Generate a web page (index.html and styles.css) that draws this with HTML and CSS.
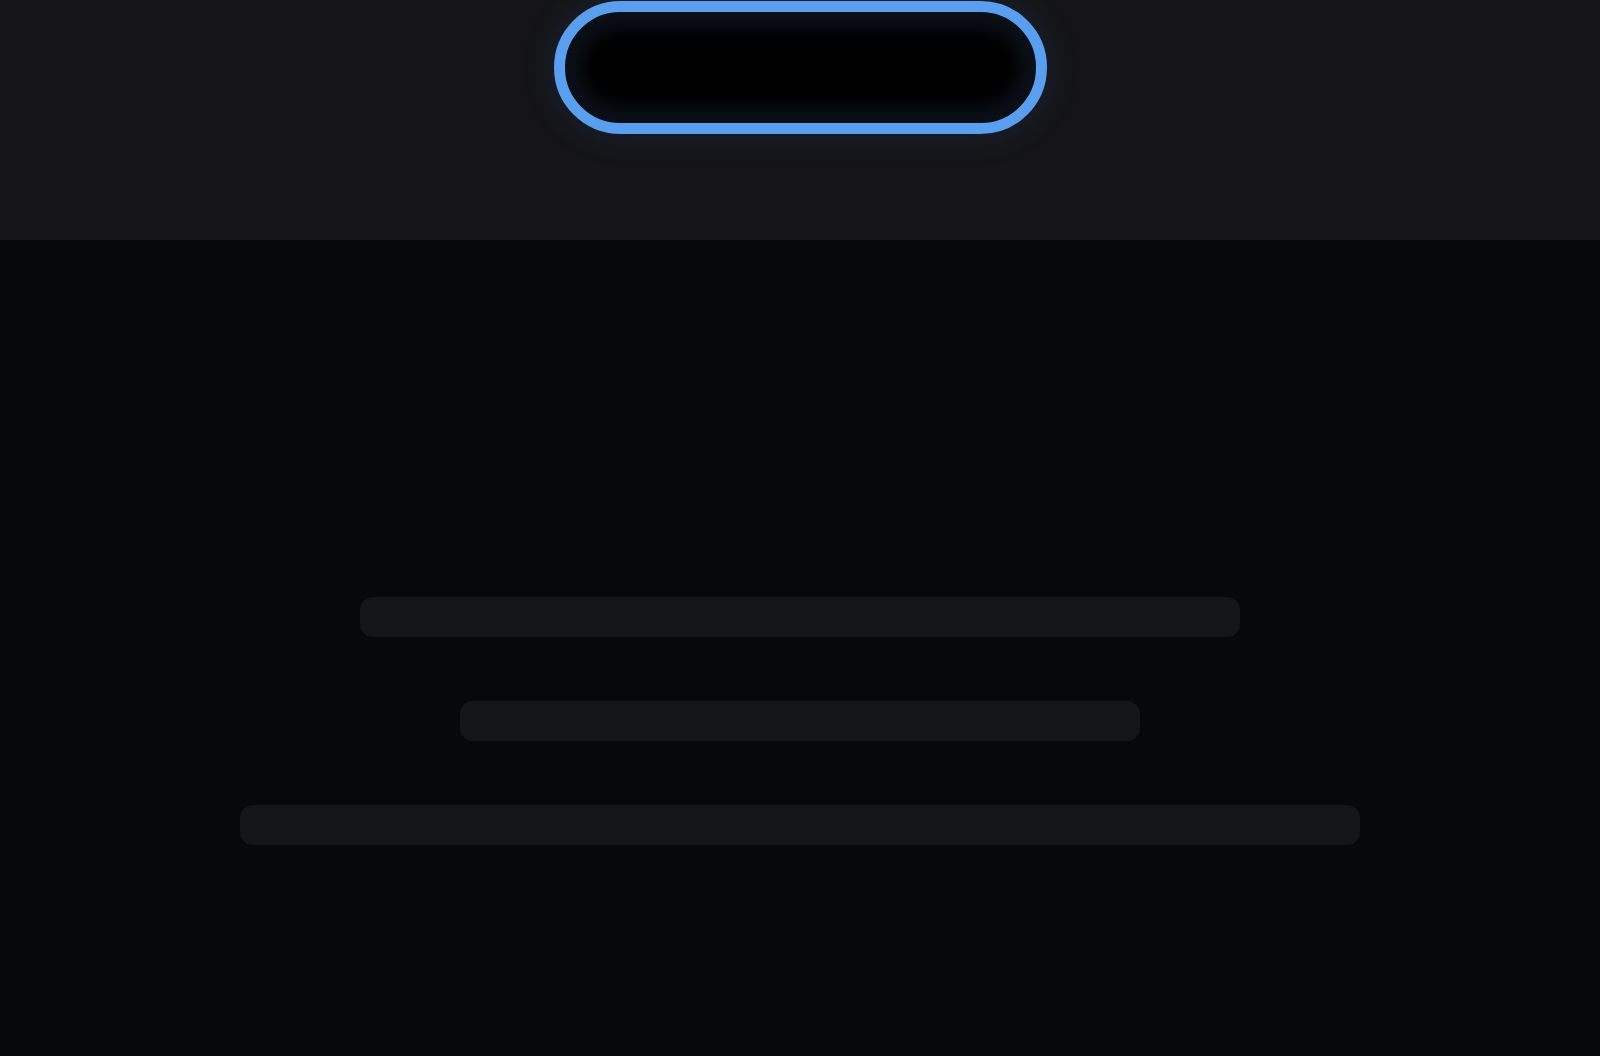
FILE: index.html
```html
<!DOCTYPE html>
<html lang="en">
<head>
<meta charset="utf-8">
<title>Loading</title>
<link rel="stylesheet" href="styles.css">
</head>
<body>
  <header class="topbar">
    <div class="search-pill" aria-label="Search"></div>
  </header>
  <main class="content">
    <div class="skeleton skeleton--md"></div>
    <div class="skeleton skeleton--sm"></div>
    <div class="skeleton skeleton--lg"></div>
  </main>
</body>
</html>
```
FILE: styles.css
```css
html, body {
  margin: 0;
  padding: 0;
  height: 100%;
  background: #07080b;
  font-family: "Inter", "Liberation Sans", sans-serif;
}

body {
  display: flex;
  flex-direction: column;
  min-height: 1056px;
}

.topbar {
  height: 240px;
  flex: none;
  background: #151518;
  display: flex;
  justify-content: center;
  align-items: flex-start;
  padding-top: 1px;
  box-sizing: border-box;
}

.search-pill {
  width: 493px;
  height: 133px;
  box-sizing: border-box;
  border: 11px solid #5a9ef0;
  border-radius: 67px;
  background: #000;
  box-shadow:
    inset 0 0 18px 16px rgba(12, 17, 26, 0.95),
    0 0 28px 6px rgba(40, 70, 120, 0.2);
}

.content {
  flex: 1;
  display: flex;
  flex-direction: column;
  align-items: center;
  gap: 64px;
  padding-top: 357px;
  background: #07080b;
}

.skeleton {
  height: 40px;
  border-radius: 13px;
  background: #141518;
}

.skeleton--md { width: 880px; }
.skeleton--sm { width: 680px; }
.skeleton--lg { width: 1120px; }
```
